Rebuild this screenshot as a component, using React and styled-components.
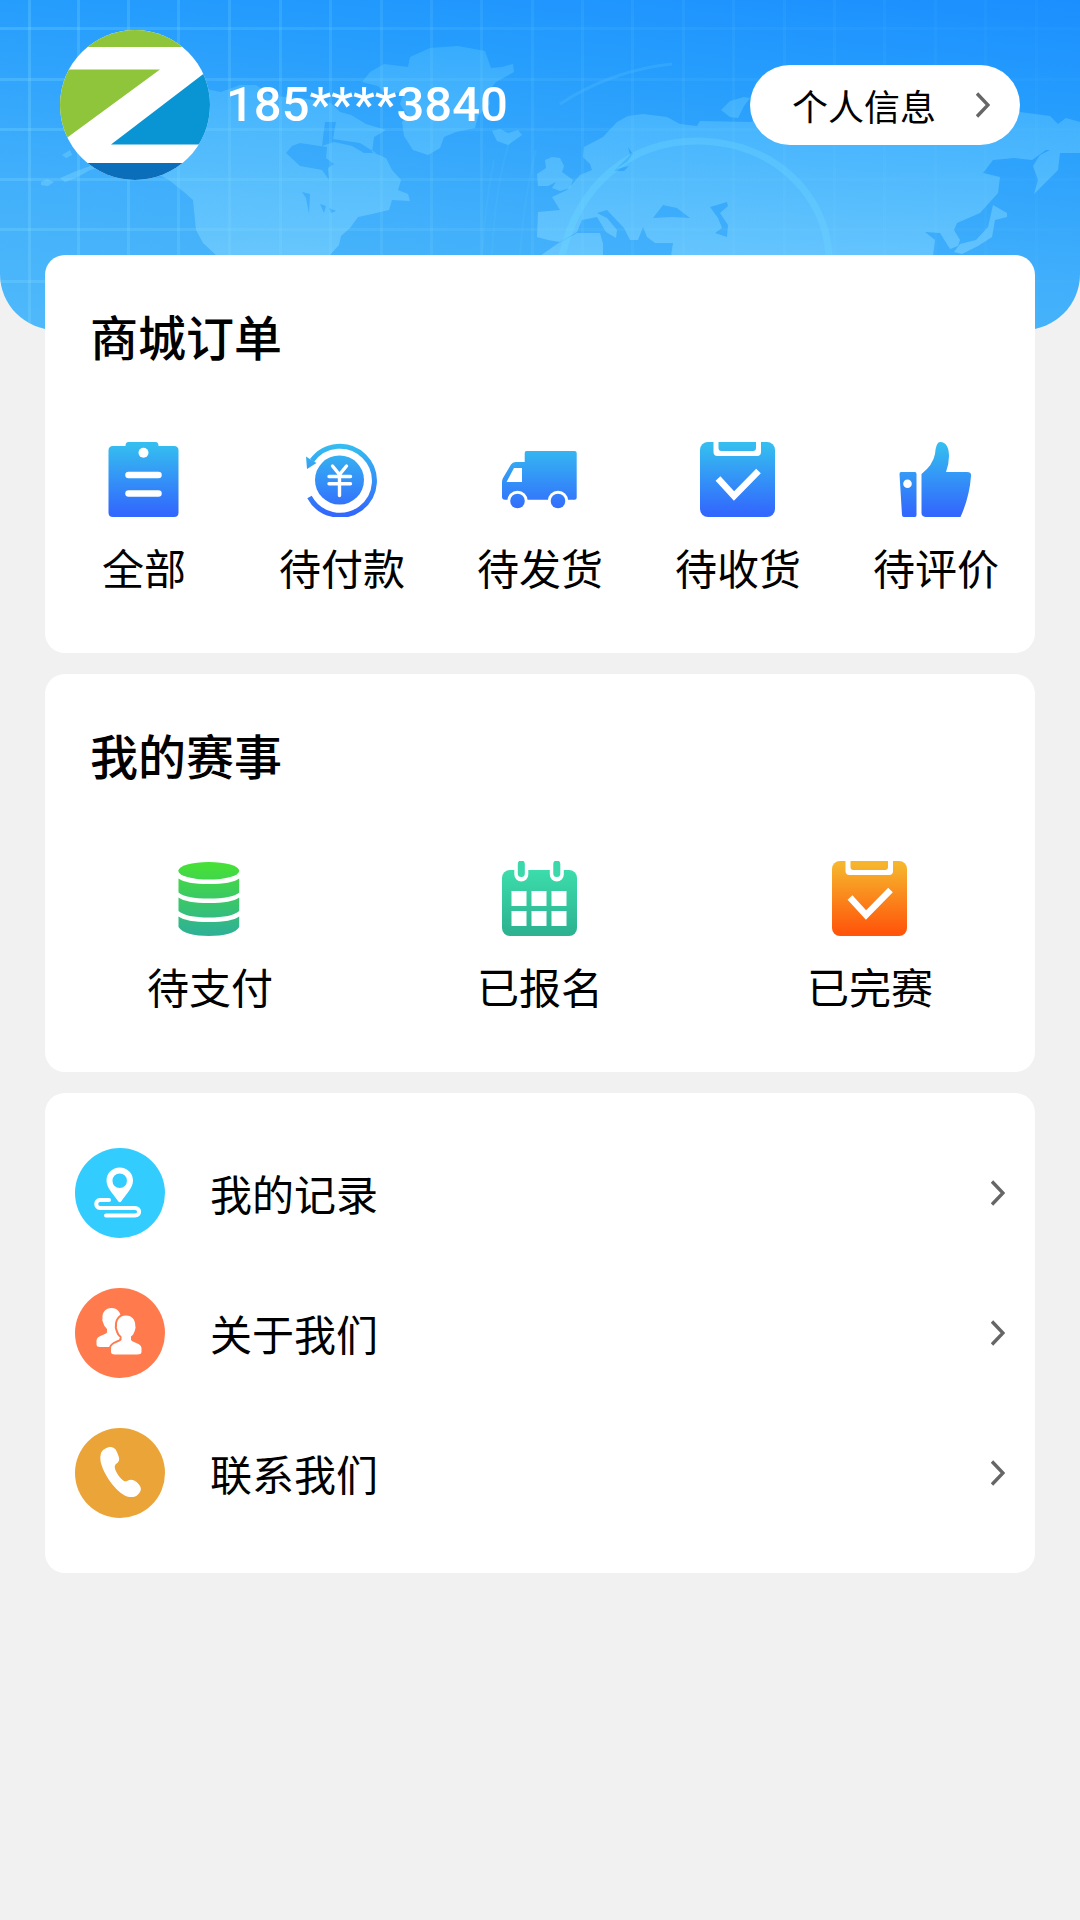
import React from "react";
import styled, { createGlobalStyle } from "styled-components";

const GlobalStyle = createGlobalStyle`
  * {
    box-sizing: border-box;
  }
  body {
    margin: 0;
    background: #f1f1f1;
    color: #000;
    font-family: "Noto Sans CJK SC", sans-serif;
  }
  button {
    border: 0;
    padding: 0;
    background: none;
    color: inherit;
    font-family: inherit;
    cursor: pointer;
  }
`;

const Hero = styled.header`
  position: relative;
  overflow: hidden;
  display: flex;
  align-items: center;
  padding: 30px 60px 150px;
  border-radius: 0 0 56px 56px;
  background: linear-gradient(186deg, #1b8fff 0%, #259dfd 25%, #41affb 65%, #4fb9fa 100%);
`;

const HeroArt = styled.svg`
  position: absolute;
  left: 0;
  top: 0;
  width: 100%;
  height: 100%;
`;

const Avatar = styled.svg`
  position: relative;
  flex: none;
  width: 150px;
  height: 150px;
`;

const Phone = styled.div`
  position: relative;
  flex: 1;
  margin-left: 16px;
  font-family: Roboto, sans-serif;
  font-size: 49px;
  line-height: 60px;
  font-weight: 500;
  color: #fff;
`;

const ProfileButton = styled.button`
  position: relative;
  display: flex;
  align-items: center;
  gap: 40px;
  && {
    padding: 14px 30px 14px 42px;
    background: #fff;
  }
  border-radius: 41px;
  font-size: 36px;
  line-height: 52px;
`;

const Main = styled.main`
  position: relative;
  display: grid;
  gap: 21px;
  margin-top: -75px;
  padding: 0 45px 40px;
`;

const Card = styled.section`
  padding: ${({ $list }) => ($list ? "30px 0" : "48px 0 56px")};
  border-radius: 20px;
  background: #fff;
`;

const CardTitle = styled.h2`
  margin: 0 45px 75px;
  font-size: 48px;
  line-height: 64px;
  font-weight: 500;
`;

const Tiles = styled.div`
  display: flex;
`;

const Tile = styled.button`
  flex: 1;
  display: flex;
  flex-direction: column;
  align-items: center;
  gap: 20px;
  font-size: 42px;
  line-height: 60px;
  white-space: nowrap;
`;

const TileIcon = styled.svg`
  width: 76px;
  height: 75px;
`;

const Row = styled.a`
  display: flex;
  align-items: center;
  height: 140px;
  padding: 0 30px;
  color: inherit;
  font-size: 42px;
  line-height: 60px;
  text-decoration: none;
`;

const RowIcon = styled.svg`
  flex: none;
  width: 90px;
  height: 90px;
`;

const RowLabel = styled.span`
  flex: 1;
  margin-left: 45px;
`;

const ChevronSvg = styled.svg`
  flex: none;
  width: 14px;
  height: 26px;
`;

const Chevron = () => (
  <ChevronSvg viewBox="0 0 14 26" fill="none" aria-hidden="true">
    <path d="M1 1.5L12 13L1 24.5" stroke="#666" strokeWidth="3.4" />
  </ChevronSvg>
);

const gridX = [29, 78, 128, 178, 229, 280, 330, 381, 431, 481, 532, 582, 632, 683, 733, 784, 834, 884, 935, 985, 1036];
const gridY = [28, 79, 129, 179, 229, 281];

const WorldMap = () => (
  <HeroArt viewBox="0 0 1080 330" preserveAspectRatio="none" aria-hidden="true">
    <defs>
      <linearGradient id="land" gradientUnits="userSpaceOnUse" x1="0" y1="40" x2="0" y2="256">
        <stop offset="0" stopColor="#66d0ff" stopOpacity="0.28" />
        <stop offset="1" stopColor="#88daff" stopOpacity="0.5" />
      </linearGradient>
      <linearGradient id="grid" gradientUnits="userSpaceOnUse" x1="0" y1="0" x2="1080" y2="0">
        <stop offset="0" stopColor="#7fdcff" stopOpacity="0.26" />
        <stop offset="0.5" stopColor="#7fdcff" stopOpacity="0.1" />
        <stop offset="1" stopColor="#7fdcff" stopOpacity="0.03" />
      </linearGradient>
      <linearGradient id="arc" gradientUnits="userSpaceOnUse" x1="560" y1="0" x2="840" y2="0">
        <stop offset="0" stopColor="#6fe0ff" stopOpacity="0.26" />
        <stop offset="1" stopColor="#6fd8ff" stopOpacity="0.3" />
      </linearGradient>
    </defs>
    <g fill="url(#grid)">
      {gridX.map((x) => (
        <rect key={x} x={x - 1} y="0" width="3" height="330" />
      ))}
      {gridY.map((y) => (
        <rect key={y} x="0" y={y - 1} width="1080" height="3" />
      ))}
    </g>
    <g fill="url(#land)" fillRule="evenodd">
      <path d="M150 100L200 88L221 92L240 85L256 85L272 96L300 98L331 103L340 112L351 115L366 124L386 130L374 137L372 152L386 158L392 170L401 180L398 190L408 194L410 201L392 200L389 210L372 214L358 217L350 228L341 236L339 245L329 256H217L203 243L196 230L193 200L184 192L169 180L150 170L110 165L90 170L76 178L65 182L60 178L74 172L90 166L120 150ZM286 153L292 146L300 143L327 147L326 158L334 164L328 168L329 180L322 170L300 166ZM325 122L336 122L333 139L360 143L376 153L364 153L352 146L334 142L322 146ZM302 192L310 194L309 214L306 198ZM320 204L326 206L324 213ZM329 208L336 211L331 213Z" />
      <path d="M41 182L47 179L54 182L48 186L41 185Z" />
      <path d="M62 155L70 150L72 155L66 158Z" />
      <path d="M362 82L370 72L384 64L400 66L408 67L410 57L430 48L458 46L485 51L491 68L502 67L513 64L514 72L496 82L488 92L490 104L478 116L475 128L456 132L444 137L440 148L428 155L413 150L404 136L402 122L408 116L400 104L404 92L386 94L378 86Z" />
      <path d="M492 131L500 129L508 133L518 130L522 135L508 145L497 141Z" />
      <path d="M545 160L552 157L560 158L564 166L562 172L573 180L570 188L560 191L552 188L556 182L548 186L538 186L537 174L546 168Z" />
      <path d="M583 157L584 147L603 137L617 122L628 116L643 114L667 117L680 124L697 126L700 121L750 122L800 108H980L1020 112L1050 116L1058 124L1066 118L1080 122V153H1060L1058 170L1046 182L1034 194L1038 180L1033 166L1040 155L1050 150L1046 150L1032 160L1014 158L993 160L983 173L1000 177L998 193L980 213L957 223L954 230L960 240L958 246L950 249L940 233L925 232L935 240L933 256H671L673 243L655 243L647 237L643 227L638 240L630 240L624 228L607 210L597 213L607 218L617 230L616 238L606 232L597 217L582 220L577 232L560 242L548 240L537 237L538 212L560 210L552 197L567 190L580 175L592 170L590 164ZM653 218L663 205L677 208L690 218L672 217ZM710 207L727 202L728 206L720 213L728 225L727 237L715 233L722 228L718 218ZM628 147L633 154L627 162L616 169L629 166L624 171L614 171L624 161L630 155Z" />
      <path d="M540 256L557 244L577 233L600 233L603 244V256Z" />
      <path d="M721 110L730 101L744 97L750 98L744 106L738 118L730 117Z" />
      <path d="M993 205L1007 213V217L995 220L992 237L978 246L962 254L954 252L960 244L976 240L988 227Z" />
    </g>
    <path d="M562 256C578 185 630 140 700 141C775 143 826 195 829 256" fill="none" stroke="url(#arc)" strokeWidth="7" />
    <path d="M560 104C590 84 630 68 672 64" fill="none" stroke="#5cc4ff" strokeOpacity="0.25" strokeWidth="3" />
    <path d="M492 256C494 210 500 170 510 140M482 256C484 220 488 190 494 160M520 256C522 220 526 190 536 150" fill="none" stroke="#6fd8ff" strokeOpacity="0.1" strokeWidth="2" />
  </HeroArt>
);

const Logo = () => (
  <Avatar viewBox="0 0 150 150" role="img" aria-label="头像">
    <clipPath id="avatarClip">
      <circle cx="75" cy="75" r="75" />
    </clipPath>
    <g clipPath="url(#avatarClip)">
      <rect width="150" height="150" fill="#fff" />
      <rect width="150" height="17" fill="#8fc53a" />
      <path d="M0 39.500H100L8 107L0 113Z" fill="#8fc53a" />
      <path d="M150 39L142 45L51 114.500H150Z" fill="#0994d4" />
      <rect y="133" width="150" height="17" fill="#0a6ebb" />
    </g>
  </Avatar>
);

// Vertical gradient shared by every shape of one tile icon
const Gradient = ({ id, from, to }) => (
  <linearGradient id={id} gradientUnits="userSpaceOnUse" x1="0" y1="0" x2="0" y2="75">
    <stop offset="0.05" stopColor={from} />
    <stop offset="0.95" stopColor={to} />
  </linearGradient>
);

const BLUE = { from: "#35bcf0", to: "#3268fd" };

const AllIcon = () => (
  <TileIcon viewBox="0 0 76 75" aria-hidden="true">
    <Gradient id="all" {...BLUE} />
    <path
      fill="url(#all)"
      d="M22.500 0H49.500Q52.500 0 52.500 4H68Q72.500 4 72.500 8.500V70.500Q72.500 75 68 75H7Q2.500 75 2.500 70.500V8.500Q2.500 4 7 4H19.500Q19.500 0 22.500 0Z"
    />
    <circle cx="37.500" cy="10.700" r="5" fill="#fff" />
    <path d="M22.500 33H52.500M22.500 51.500H52.500" stroke="#fff" strokeWidth="6.500" strokeLinecap="round" />
  </TileIcon>
);

const RefundIcon = () => (
  <TileIcon viewBox="0 0 76 75" fill="none" aria-hidden="true">
    <Gradient id="refund" {...BLUE} />
    <path d="M8 18.500A34.500 34.500 0 1 1 5.500 55" stroke="url(#refund)" strokeWidth="5" />
    <path d="M2 14.500L5 16.500L12.500 21L3 27Z" fill="url(#refund)" />
    <circle cx="35.500" cy="38" r="24.500" fill="url(#refund)" />
    <path
      d="M28.500 24L35.500 32.500L42.500 24M35.500 32V53.500M25 34.500H46.500M25 41.800H46.500"
      stroke="#fff"
      strokeWidth="3.400"
      strokeLinecap="round"
    />
  </TileIcon>
);

const TruckIcon = () => (
  <TileIcon viewBox="0 0 76 75" aria-hidden="true">
    <Gradient id="truck" {...BLUE} />
    <path
      fill="url(#truck)"
      fillRule="evenodd"
      d="M24.500 9H72.500Q74.700 9 74.700 11V55.700Q74.700 57.700 72.500 57.700H3Q0 57.700 0 54.700V40Q0 38 1 36L9 22.500Q10.500 20 13.500 20H22.700V11Q22.700 9 24.500 9ZM12 26L4.500 40H20V26Z"
    />
    <circle cx="15.500" cy="59" r="10.300" fill="#fff" />
    <circle cx="56" cy="59" r="10.300" fill="#fff" />
    <circle cx="15.500" cy="59" r="7.300" fill="url(#truck)" />
    <circle cx="56" cy="59" r="7.300" fill="url(#truck)" />
  </TileIcon>
);

const CheckIcon = ({ id, from, to }) => (
  <TileIcon viewBox="0 0 76 75" fill="none" aria-hidden="true">
    <Gradient id={id} from={from} to={to} />
    <rect width="75" height="75" rx="8" fill={`url(#${id})`} />
    <path d="M13.500 0V10Q13.500 14 17.500 14H57Q61 14 61 10V0H56V6Q56 9 53 9H21.500Q18.500 9 18.500 6V0Z" fill="#fff" />
    <path d="M18 36.500L34 54L58.500 29" stroke="#fff" strokeWidth="6.500" />
  </TileIcon>
);

const ThumbIcon = () => (
  <TileIcon viewBox="0 0 76 75" aria-hidden="true">
    <Gradient id="thumb" {...BLUE} />
    <path fill="url(#thumb)" d="M3 30H17Q18.500 30 18.500 32V73Q18.500 75 17 75H6Q4 75 4 73L1.500 32Q1.500 30 3 30Z" />
    <circle cx="9.500" cy="41.700" r="4.300" fill="#fff" />
    <path
      fill="url(#thumb)"
      d="M23.500 32Q35 23 37 12Q38 0 42 0C49 0 51 7 51 14Q51 22 48 30H69Q73.500 30 73 34Q71.500 55 62.500 75H27.500Q23.500 74.500 23.500 71Z"
    />
  </TileIcon>
);

const DatabaseIcon = () => (
  <TileIcon viewBox="0 0 76 75" aria-hidden="true">
    <Gradient id="database" from="#46e037" to="#2fb294" />
    <g fill="url(#database)">
      <ellipse cx="36.800" cy="9.800" rx="30.500" ry="8.800" />
      <path d="M6.500 17.500Q14 23 36.800 23Q60 23 67.200 17.500V31.500Q60 37.500 36.800 37.500Q14 37.500 6.500 31.500Z" />
      <path d="M6.500 36.500Q14 42 36.800 42Q60 42 67.200 36.500V50Q60 56.500 36.800 56.500Q14 56.500 6.500 50Z" />
      <path d="M6.500 55.500Q14 61 36.800 61Q60 61 67.200 55.500V66C64 72 52 75 36.800 75C22 75 10 72 6.500 66Z" />
    </g>
  </TileIcon>
);

const CalendarIcon = () => (
  <TileIcon viewBox="0 0 76 75" fill="none" strokeLinecap="round" aria-hidden="true">
    <Gradient id="calendar" from="#3de0ae" to="#2db391" />
    <rect y="9" width="75" height="66" rx="8" fill="url(#calendar)" />
    <path d="M19.300 5V13.500M54.800 5V13.500" stroke="#fff" strokeWidth="14" />
    <path d="M19.300 3V12.500M54.800 3V12.500" stroke="#3ad8aa" strokeWidth="7" />
    <path
      fill="#fff"
      d="M9.500 30H24.500V45H9.500ZM29.500 30H44.500V45H29.500ZM49.500 30H64.500V45H49.500ZM9.500 50H24.500V65H9.500ZM29.500 50H44.500V65H29.500ZM49.500 50H64.500V65H49.500Z"
    />
  </TileIcon>
);

const RecordIcon = () => (
  <RowIcon viewBox="0 0 90 90" fill="none" aria-hidden="true">
    <circle cx="45" cy="45" r="45" fill="#33ccff" />
    <path
      fill="#fff"
      fillRule="evenodd"
      d="M44.700 19.500C52 19.500 58 25 58 32.500C58 40 51 46 46.500 53Q44.700 55.500 43 53C38.500 46 31.500 40 31.500 32.500C31.500 25 37.500 19.500 44.700 19.500ZM44.700 25.500A7.200 7.200 0 1 0 44.700 40A7.200 7.200 0 1 0 44.700 25.500Z"
    />
    <path
      d="M34 52H25C20 52 20 60 25 60H60C65.500 60 65.500 67.500 60 67.500H31"
      stroke="#fff"
      strokeWidth="4"
      strokeLinecap="round"
    />
  </RowIcon>
);

const person =
  "M51 27.500C57 27.500 60.500 32 60.300 38Q61 39 60 42Q58.500 47 56 48.500V52C58 55 66 55 66.500 60V64Q66.500 66.500 62 66.500H40Q36 66.500 36 64V60C36.500 55 44 55 46.500 52V48.500Q43.500 46 42.500 42Q41.300 39 42 38C41.500 32 45 27.500 51 27.500Z";

const AboutIcon = () => (
  <RowIcon viewBox="0 0 90 90" aria-hidden="true">
    <circle cx="45" cy="45" r="45" fill="#ff7a4d" />
    <path d={person} fill="#fff" transform="translate(-14.500 -7.500)" />
    <path d={person} fill="#fff" stroke="#ff7a4d" strokeWidth="4" paintOrder="stroke" />
  </RowIcon>
);

const PhoneIcon = () => (
  <RowIcon viewBox="0 0 90 90" aria-hidden="true">
    <circle cx="45" cy="45" r="45" fill="#eba437" />
    <path
      fill="#fff"
      d="M26 25C28 21 33 18.500 37 19.200C41 20 42 24 43.500 28C45 32 44 34 40.500 36.500C38 39 42 46.500 46.500 51C49 53.500 50.500 54 53 52.500C56 51 60 52 63.500 56C67 60 66.500 63 63 66.500C60.500 69.500 56 69.500 52 68.500C41 64 28 46 25.500 33Q25 28 26 25Z"
    />
  </RowIcon>
);

const orders = [
  { label: "全部", icon: <AllIcon /> },
  { label: "待付款", icon: <RefundIcon /> },
  { label: "待发货", icon: <TruckIcon /> },
  { label: "待收货", icon: <CheckIcon id="received" {...BLUE} /> },
  { label: "待评价", icon: <ThumbIcon /> },
];

const events = [
  { label: "待支付", icon: <DatabaseIcon /> },
  { label: "已报名", icon: <CalendarIcon /> },
  { label: "已完赛", icon: <CheckIcon id="finished" from="#f6b52c" to="#ff560b" /> },
];

const links = [
  { label: "我的记录", href: "#records", icon: <RecordIcon /> },
  { label: "关于我们", href: "#about", icon: <AboutIcon /> },
  { label: "联系我们", href: "#contact", icon: <PhoneIcon /> },
];

const TileCard = ({ title, items }) => (
  <Card>
    <CardTitle>{title}</CardTitle>
    <Tiles>
      {items.map(({ label, icon }) => (
        <Tile key={label} type="button">
          {icon}
          <span>{label}</span>
        </Tile>
      ))}
    </Tiles>
  </Card>
);

const App = () => (
  <>
    <GlobalStyle />
    <Hero>
      <WorldMap />
      <Logo />
      <Phone>185****3840</Phone>
      <ProfileButton type="button">
        <span>个人信息</span>
        <Chevron />
      </ProfileButton>
    </Hero>
    <Main>
      <TileCard title="商城订单" items={orders} />
      <TileCard title="我的赛事" items={events} />
      <Card as="nav" $list>
        {links.map(({ label, href, icon }) => (
          <Row key={label} href={href}>
            {icon}
            <RowLabel>{label}</RowLabel>
            <Chevron />
          </Row>
        ))}
      </Card>
    </Main>
  </>
);

export default App;
